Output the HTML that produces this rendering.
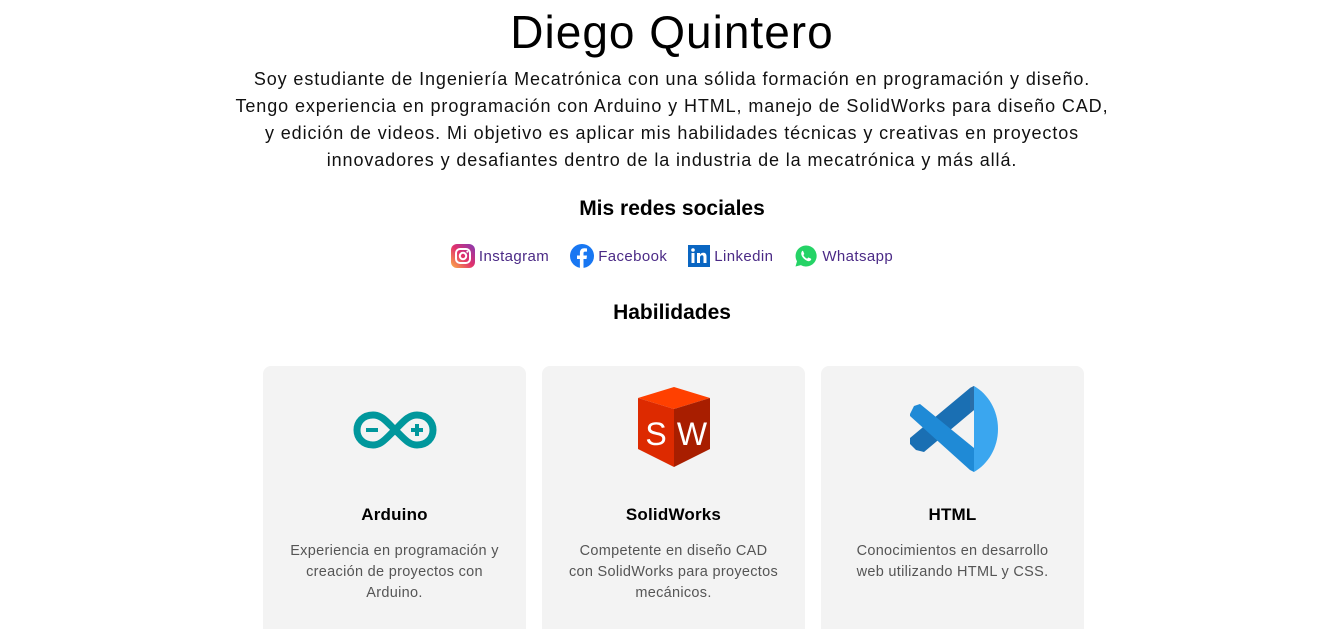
<!DOCTYPE html>
<html><head><meta charset="utf-8"><style>
*{margin:0;padding:0;box-sizing:border-box}
html,body{width:1344px;height:629px;overflow:hidden}
body{background:#fff;font-family:"Liberation Sans",sans-serif;color:#000;position:relative}
.abs{position:absolute;left:0;width:1344px;text-align:center;white-space:nowrap}
h1{font-weight:400;font-size:46px;letter-spacing:1px;line-height:52px}
.desc{top:66px;font-size:18px;line-height:27px;letter-spacing:0.9px;color:#111}
h2{font-weight:600;font-size:21px;letter-spacing:0}
.soc{top:244px;display:flex;justify-content:center;gap:21px;font-size:15px;color:#4b2a86;letter-spacing:.4px;left:0}
.soc span{display:flex;align-items:center;gap:4px}
.card{position:absolute;top:366px;width:263px;height:263px;background:#f3f3f3;border-radius:8px 8px 0 0;text-align:center}
.card h3{position:absolute;top:139px;width:100%;font-size:17px;font-weight:600;letter-spacing:.2px}
.card p{position:absolute;top:175px;left:0;width:100%;font-size:14.5px;line-height:21px;color:#555;letter-spacing:.3px}
.card svg{position:absolute}
</style></head><body>
<div class="abs" style="top:6px"><h1>Diego Quintero</h1></div>
<div class="abs desc">Soy estudiante de Ingeniería Mecatrónica con una sólida formación en programación y diseño.<br>Tengo experiencia en programación con Arduino y HTML, manejo de SolidWorks para diseño CAD,<br>y edición de videos. Mi objetivo es aplicar mis habilidades técnicas y creativas en proyectos<br>innovadores y desafiantes dentro de la industria de la mecatrónica y más allá.</div>
<div class="abs" style="top:197px"><h2>Mis redes sociales</h2></div>
<div class="abs soc">
<span><svg width="24" height="24" viewBox="0 0 24 24"><defs><linearGradient id="ig" x1="0" y1="1" x2="1" y2="0"><stop offset="0" stop-color="#fcb045"/><stop offset=".5" stop-color="#e1306c"/><stop offset="1" stop-color="#833ab4"/></linearGradient></defs><rect x="0" y="0" width="24" height="24" rx="6" fill="url(#ig)"/><rect x="5" y="5" width="14" height="14" rx="4" fill="none" stroke="#fff" stroke-width="2"/><circle cx="12" cy="12" r="3.2" fill="none" stroke="#fff" stroke-width="2"/><circle cx="16.3" cy="7.7" r="1" fill="#fff"/></svg>Instagram</span>
<span><svg width="24" height="24" viewBox="0 0 24 24"><circle cx="12" cy="12" r="12" fill="#1877f2"/><path d="M13.5 24V15h3l.5-3.5h-3.5V9.3c0-1 .3-1.7 1.8-1.7H17V4.5c-.4 0-1.5-.2-2.7-.2-2.7 0-4.4 1.6-4.4 4.6v2.6H7V15h2.9v9z" fill="#fff"/></svg>Facebook</span>
<span><svg width="22" height="22" viewBox="0 0 22 22"><rect width="22" height="22" fill="#0a66c2"/><rect x="3.5" y="8" width="3" height="10" fill="#fff"/><circle cx="5" cy="5" r="1.8" fill="#fff"/><path d="M9 8h3v1.5c.6-1 1.7-1.8 3.3-1.8 2.6 0 3.2 1.7 3.2 4V18h-3v-5.5c0-1.3-.3-2.2-1.5-2.2s-2 .9-2 2.2V18H9z" fill="#fff"/></svg>Linkedin</span>
<span><svg width="24" height="24" viewBox="0 0 24 24"><path d="M12 1.5a10.5 10.5 0 0 0-9 15.8L1.5 22.5l5.4-1.4A10.5 10.5 0 1 0 12 1.5z" fill="#25d366"/><path d="M8.4 6.8c.3 0 .6 0 .8.5l1 2.3c.1.3 0 .5-.1.7l-.7.8c.8 1.6 2 2.8 3.7 3.6l.9-1c.2-.2.4-.2.7-.1l2.2 1c.3.2.4.4.3.7-.2 1.2-1.2 1.9-2.4 1.9-3.4-.3-7.4-4.2-7.6-7.5 0-1.1.6-2.3 1.2-2.9z" fill="#fff"/></svg>Whatsapp</span>
</div>
<div class="abs" style="top:301px"><h2>Habilidades</h2></div>

<div class="card" style="left:263px">
<svg style="left:90px;top:44px" width="84" height="40" viewBox="0 0 84 40"><path d="M20 5C10 5 4 12 4 20s6 15 16 15c9 0 14-8 22-15C50 12 55 5 64 5c10 0 16 7 16 15s-6 15-16 15c-9 0-14-8-22-15C34 12 29 5 20 5z" fill="none" stroke="#00979c" stroke-width="7"/><rect x="13" y="18" width="12" height="4" fill="#00979c"/><rect x="58" y="18" width="12" height="4" fill="#00979c"/><rect x="62" y="14" width="4" height="12" fill="#00979c"/></svg>
<h3>Arduino</h3>
<p>Experiencia en programación y<br>creación de proyectos con<br>Arduino.</p></div>

<div class="card" style="left:542px">
<svg style="left:96px;top:21px" width="72" height="80" viewBox="0 0 72 80"><polygon points="0,11 36,0 72,11 36,22" fill="#ff4000"/><polygon points="0,11 36,22 36,80 0,62" fill="#dd2a00"/><polygon points="72,11 36,22 36,80 72,62" fill="#a81e00"/><text x="18" y="58" font-family="Liberation Sans Narrow,Liberation Sans,sans-serif" font-size="32" fill="#fff" text-anchor="middle" transform="scale(1,1)">S</text><text x="54" y="58" font-family="Liberation Sans Narrow,Liberation Sans,sans-serif" font-size="32" fill="#fff" text-anchor="middle">W</text></svg>
<h3>SolidWorks</h3>
<p>Competente en diseño CAD<br>con SolidWorks para proyectos<br>mecánicos.</p></div>

<div class="card" style="left:821px">
<svg style="left:87px;top:20px" width="90" height="86" viewBox="0 0 90 86">
<polygon points="62,2 66,0 66,24 16,66 8,64 2,58 2,52" fill="#1a6fb3"/>
<polygon points="6,20 12,18 66,62 66,86 62,84 2,30 2,28" fill="#1f8ad6"/>
<path d="M66 0c14 8 24 24 24 43s-10 35-24 43V0z" fill="#3aa6ef"/>
<path d="M62 2l4-2v24l-4 3z" fill="#2a6ea8"/>
</svg>
<h3>HTML</h3>
<p>Conocimientos en desarrollo<br>web utilizando HTML y CSS.</p></div>
</body></html>
